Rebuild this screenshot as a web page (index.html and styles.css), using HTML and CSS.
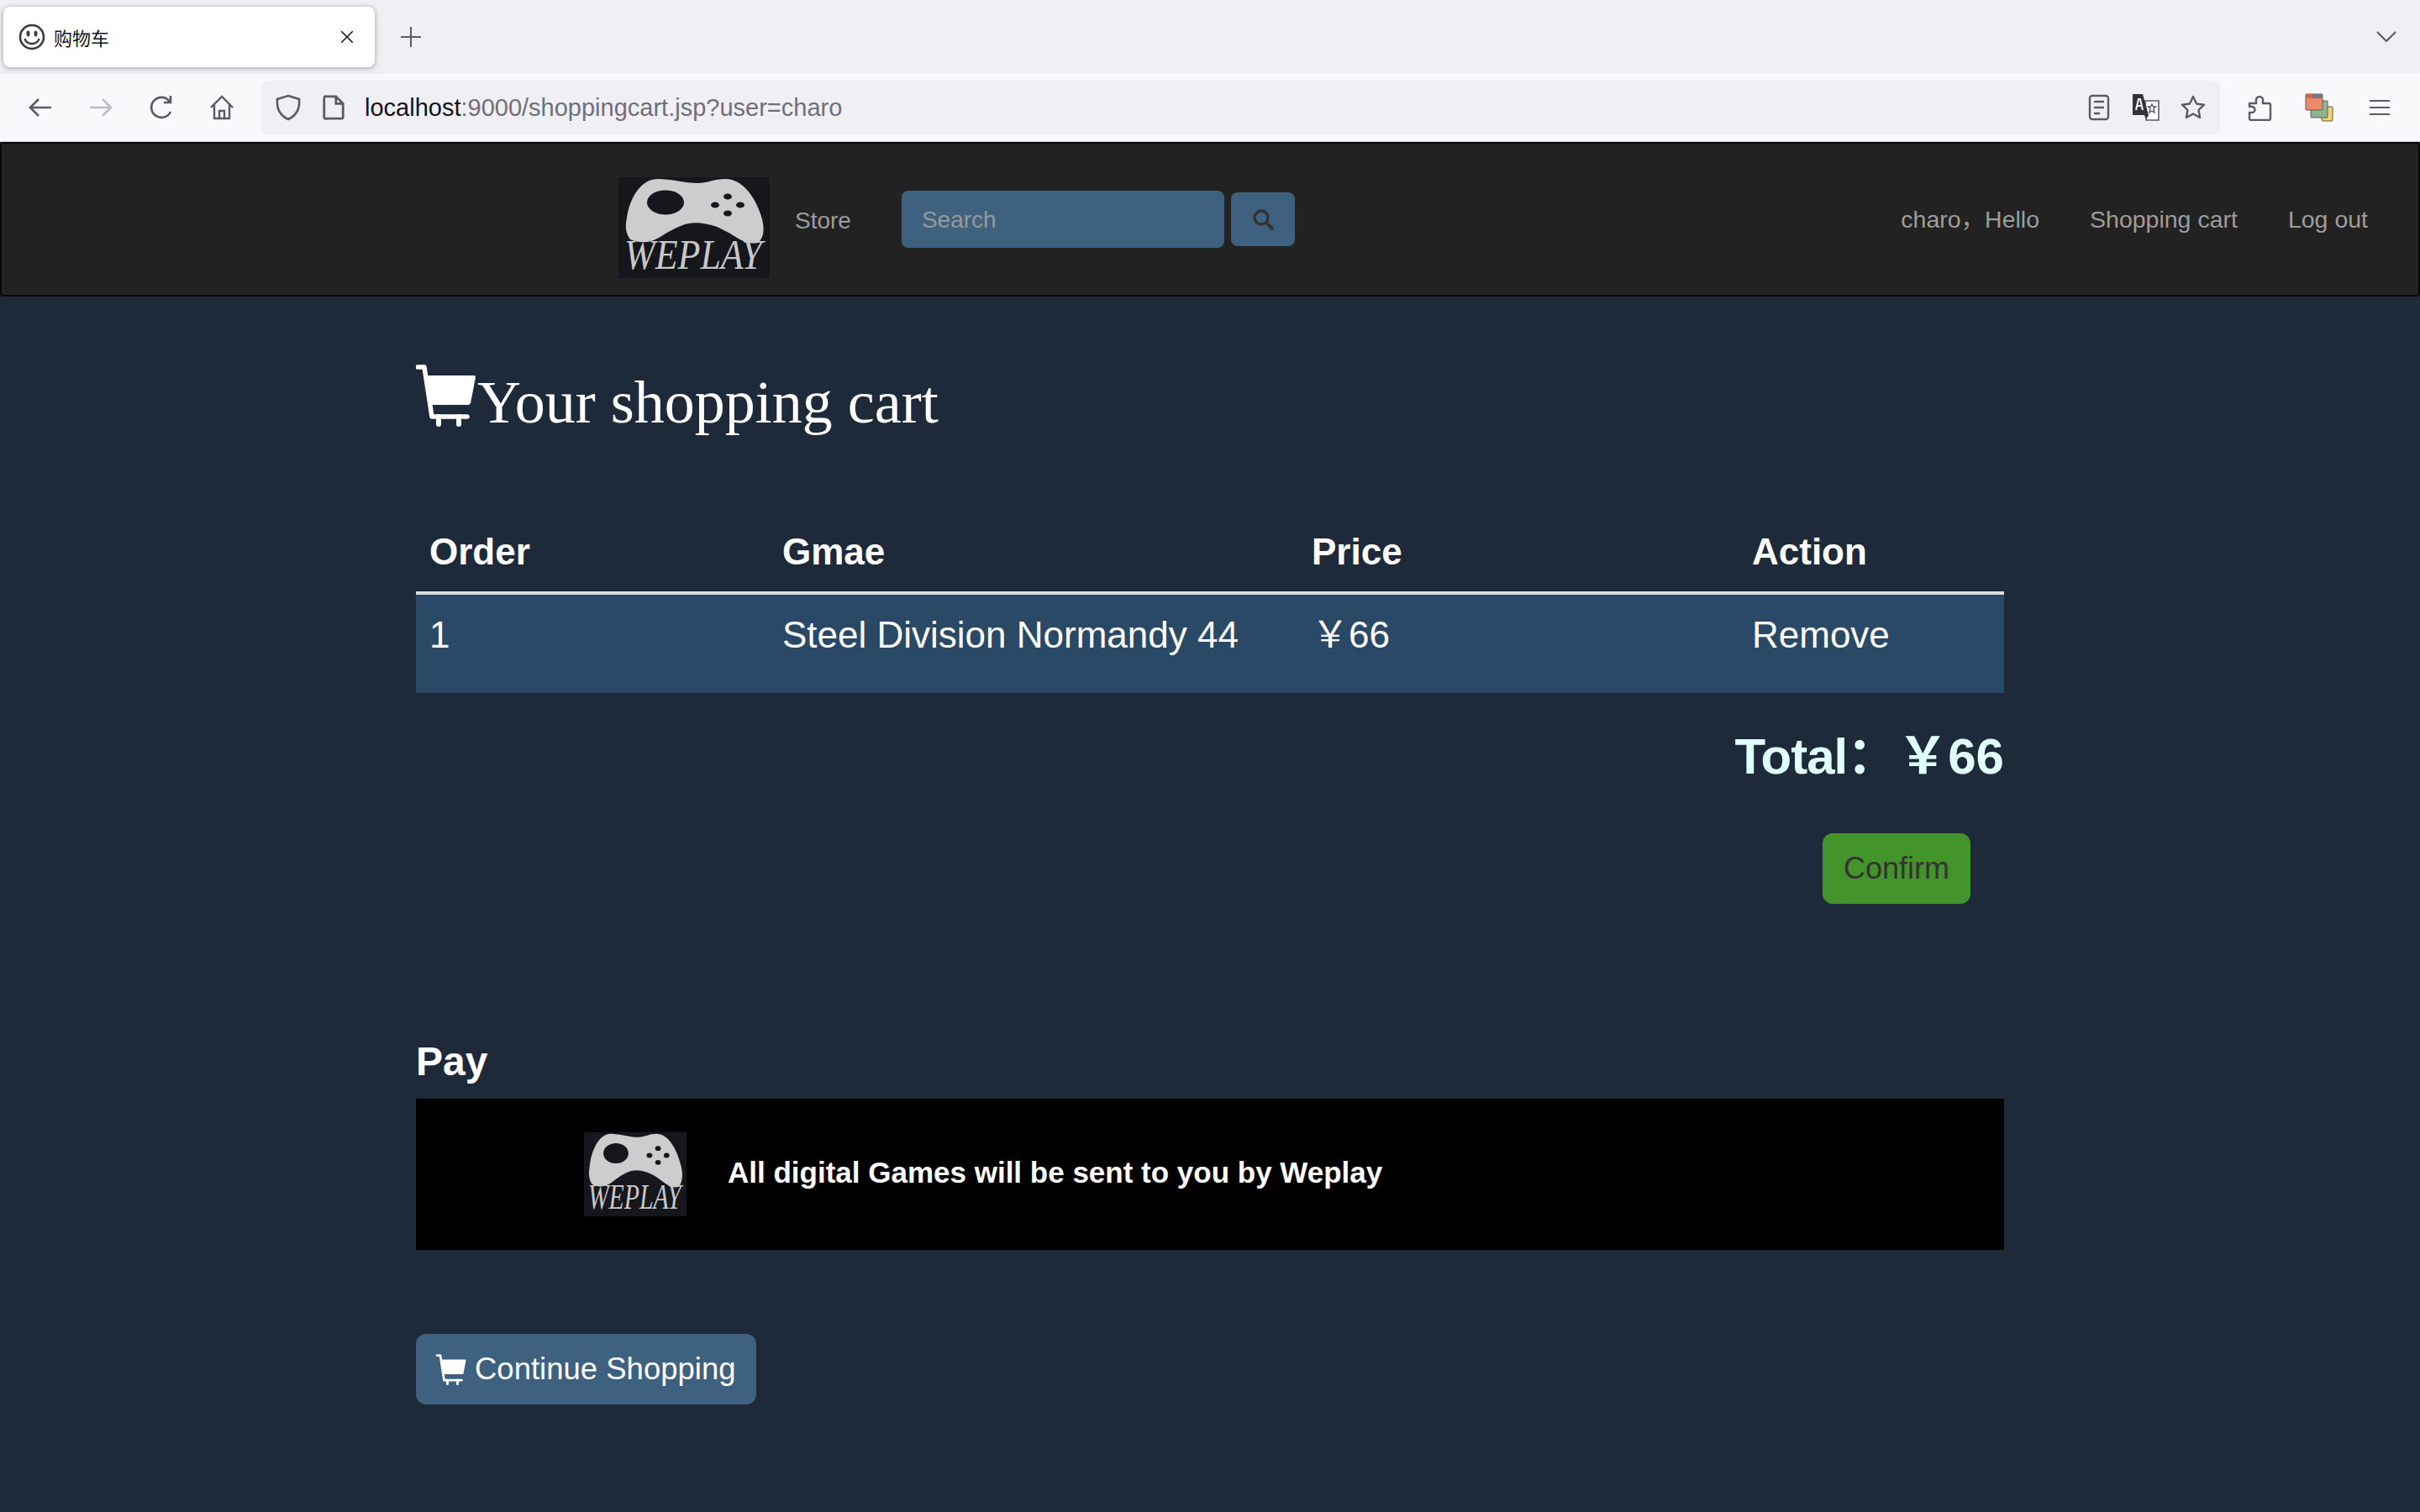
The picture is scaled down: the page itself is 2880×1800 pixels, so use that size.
FILE: index.html
```html
<!DOCTYPE html>
<html lang="zh">
<head>
    <meta charset="UTF-8">
    <title>购物车</title>
    <link rel="stylesheet" href="styles.css">
</head>
<body>

<div class="tabstrip">
    <div class="tab">
        <svg class="tab-icon" viewBox="0 0 32 32"><circle cx="16" cy="16" r="14" fill="none" stroke="#3a3a44" stroke-width="2.6"/><ellipse cx="11.5" cy="12" rx="2" ry="3.6" fill="#3a3a44"/><ellipse cx="20.5" cy="12" rx="2" ry="3.6" fill="#3a3a44"/><path d="M7.5 18c2 8 15 8 17 0" fill="none" stroke="#3a3a44" stroke-width="2.4"/></svg>
        <span class="tab-title">购物车</span>
        <svg class="tab-close" viewBox="0 0 16 16"><path d="M2 2l12 12M14 2L2 14" stroke="#15141a" stroke-width="1.4"/></svg>
    </div>
    <svg class="tab-new" viewBox="0 0 24 24"><path d="M12 0v24M0 12h24" stroke="#5b5b66" stroke-width="2"/></svg>
    <svg class="tab-list" viewBox="0 0 26 16"><path d="M2 2l11 11L24 2" fill="none" stroke="#5b5b66" stroke-width="2.2"/></svg>
</div>

<div class="toolbar">
    <svg class="tool" viewBox="0 0 32 32"><path d="M29 16H5M14 6L4 16l10 10" fill="none" stroke="#5b5b66" stroke-width="2.6"/></svg>
    <svg class="tool" viewBox="0 0 32 32"><path d="M3 16h24M18 6l10 10-10 10" fill="none" stroke="#bcbcc2" stroke-width="2.6"/></svg>
    <svg class="tool" viewBox="0 0 32 32"><path d="M27 21a12 12 0 1 1-1-12M27 2v8h-8" fill="none" stroke="#5b5b66" stroke-width="2.6"/></svg>
    <svg class="tool tool-home" viewBox="0 0 32 32"><path d="M3 16L16 3l13 13M7 13v16h18V13M13 29v-9h6v9" fill="none" stroke="#5b5b66" stroke-width="2.4"/></svg>
    <div class="urlbar">
        <svg class="url-icon" viewBox="0 0 32 32"><path d="M16 2l13 4c1 11-2 19-13 24C5 25 2 17 3 6z" fill="none" stroke="#5b5b66" stroke-width="2.6"/></svg>
        <svg class="url-icon page-icon" viewBox="0 0 32 32"><path d="M7 2h12l9 9v17a2 2 0 0 1-2 2H7a2 2 0 0 1-3-2V4a2 2 0 0 1 3-2zM19 2v9h9" fill="none" stroke="#5b5b66" stroke-width="3"/></svg>
        <span class="url-text"><span class="url-host">localhost</span>:9000/shoppingcart.jsp?user=charo</span>
        <svg class="url-end" viewBox="0 0 32 32"><rect x="5" y="2" width="22" height="28" rx="3" fill="none" stroke="#5b5b66" stroke-width="2.4"/><path d="M10 9h12M10 16h12M10 23h7" stroke="#5b5b66" stroke-width="2.4"/></svg>
        <svg class="url-end" viewBox="0 0 32 32"><path d="M15 8h16v23H16z" fill="#fff" stroke="#5b5b66" stroke-width="1.6"/><path d="M0 0h12l7 25-3 5-2-5H0z" fill="#33333a"/><path d="M4 19l3-13h2l3 13M5 14h6" fill="none" stroke="#fff" stroke-width="2"/><path d="M23 12l1.500 3h3l-2.500 2 1 5-3-2-3 2 1-5-2.500-2h3z" fill="none" stroke="#5b5b66" stroke-width="1.400"/></svg>
        <svg class="url-end" viewBox="0 0 32 32"><path d="M16 3l4 8.500 9 1.200-6.500 6.300 1.600 9L16 23.500 7.900 28l1.600-9L3 12.700l9-1.200z" fill="none" stroke="#5b5b66" stroke-width="2.4" stroke-linejoin="round"/></svg>
    </div>
    <svg class="tool tool-ext" viewBox="0 0 32 32"><path d="M4 11h8V6a4.200 4.200 0 0 1 8 0v5h7a2 2 0 0 1 2 2v16a2 2 0 0 1-2 2H6a2 2 0 0 1-2-2v-7h3a3.500 3.500 0 0 0 0-7H4z" fill="none" stroke="#5b5b66" stroke-width="2.4" stroke-linejoin="round"/></svg>
    <svg class="tool tool-multi" viewBox="0 0 34 34"><rect x="20" y="16" width="13" height="17" rx="1" fill="#f0d26e" stroke="#5b5b66"/><rect x="7" y="9" width="20" height="20" rx="1" fill="#8fb491" stroke="#5b5b66"/><rect x="1" y="1" width="20" height="19" rx="1" fill="#f08a66" stroke="#5b5b66"/><path d="M1 1h20v5H1z" fill="#77777d"/><path d="M2 1h6v5H2z" fill="#e5603c"/></svg>
    <svg class="tool tool-menu" viewBox="0 0 26 22"><path d="M1 3h24M1 11h24M1 19h24" stroke="#5b5b66" stroke-width="2.2"/></svg>
</div>

<nav class="navbar">
    <svg class="logo logo-nav" viewBox="0 0 180 120" preserveAspectRatio="none">
        <rect width="180" height="120" fill="#16171d"/>
        <path d="M47 2C62 2 80 7 94 7C106 7 114 2 127 2C150 2 165 28 171 50C174 62 173 72 166 78C156 80 148 76 141 72C130 65 118 58 106 56C98 54 90 54 84 55C72 57 58 66 48 72C40 77 27 80 14 74C8 66 8 58 10 48C13 26 26 2 47 2Z" fill="#cdcdcd"/>
        <ellipse cx="56" cy="30" rx="22" ry="14.500" fill="#16171d"/>
        <ellipse cx="130" cy="23" rx="5" ry="3.500" fill="#16171d"/>
        <ellipse cx="115" cy="33" rx="5" ry="3.500" fill="#16171d"/>
        <ellipse cx="145" cy="33" rx="5" ry="3.500" fill="#16171d"/>
        <ellipse cx="130" cy="43" rx="5" ry="3.500" fill="#16171d"/>
        <text class="logo-text" x="7" y="95" transform="scale(1 1.150)">WEPLAY</text>
    </svg>
    <a class="nav-link nav-store" href="#">Store</a>
    <input class="search-input" type="text" placeholder="Search">
    <button class="search-btn" type="button">
        <svg viewBox="0 0 28 28" width="28" height="28"><circle cx="12" cy="12" r="8" fill="none" stroke="#333" stroke-width="3.400"/><path d="M18 18l7 7" stroke="#333" stroke-width="4" stroke-linecap="round"/></svg>
    </button>
    <div class="nav-right">
        <a class="nav-link" href="#">charo，Hello</a>
        <a class="nav-link" href="#">Shopping cart</a>
        <a class="nav-link" href="#">Log out</a>
    </div>
</nav>

<div class="container">

    <h1 class="page-title">
        <svg class="cart cart-big" viewBox="0 0 72 74"><path d="M2 3h8l9 59h42" fill="none" stroke="#fff" stroke-width="5.500" stroke-linecap="round" stroke-linejoin="round"/><path d="M12 13h57a2 2 0 0 1 2 2l-6 31a3 3 0 0 1-3 2H17z" fill="#fff"/><path d="M27 62v9M51 62v9" stroke="#fff" stroke-width="6" stroke-linecap="round"/></svg>Your shopping cart
    </h1>

    <table class="cart-table">
        <thead>
            <tr>
                <th class="col-order">Order</th>
                <th class="col-game">Gmae</th>
                <th class="col-price">Price</th>
                <th>Action</th>
            </tr>
        </thead>
        <tbody>
            <tr>
                <td>1</td>
                <td>Steel Division Normandy 44</td>
                <td>￥66</td>
                <td>Remove</td>
            </tr>
        </tbody>
    </table>

    <h2 class="total"><span class="total-label">Total</span>：￥66</h2>

    <div class="confirm-row">
        <button class="btn-confirm" type="button">Confirm</button>
    </div>

    <h3 class="pay-title">Pay</h3>
    <div class="pay-box">
        <svg class="logo logo-pay" viewBox="0 0 180 120" preserveAspectRatio="none">
            <rect width="180" height="120" fill="#16171d"/>
            <path d="M47 2C62 2 80 7 94 7C106 7 114 2 127 2C150 2 165 28 171 50C174 62 173 72 166 78C156 80 148 76 141 72C130 65 118 58 106 56C98 54 90 54 84 55C72 57 58 66 48 72C40 77 27 80 14 74C8 66 8 58 10 48C13 26 26 2 47 2Z" fill="#cdcdcd"/>
            <ellipse cx="56" cy="30" rx="22" ry="14.500" fill="#16171d"/>
            <ellipse cx="130" cy="23" rx="5" ry="3.500" fill="#16171d"/>
            <ellipse cx="115" cy="33" rx="5" ry="3.500" fill="#16171d"/>
            <ellipse cx="145" cy="33" rx="5" ry="3.500" fill="#16171d"/>
            <ellipse cx="130" cy="43" rx="5" ry="3.500" fill="#16171d"/>
            <text class="logo-text" x="7" y="95" transform="scale(1 1.150)">WEPLAY</text>
        </svg>
        <span class="pay-text">All digital Games will be sent to you by Weplay</span>
    </div>

    <button class="btn-continue" type="button">
        <svg class="cart cart-small" viewBox="0 0 72 74"><path d="M2 3h8l9 59h42" fill="none" stroke="#fff" stroke-width="5.500" stroke-linecap="round" stroke-linejoin="round"/><path d="M12 13h57a2 2 0 0 1 2 2l-6 31a3 3 0 0 1-3 2H17z" fill="#fff"/><path d="M27 62v9M51 62v9" stroke="#fff" stroke-width="6" stroke-linecap="round"/></svg>
        Continue Shopping
    </button>

</div>

</body>
</html>
```

FILE: styles.css
```css
html, body {
    height: 100%;
}

body {
    font-family: "Liberation Sans", "Noto Sans CJK SC", Arial, sans-serif;
    margin: 0;
    padding: 0;
    background-color: #1e293a;
    color: #fff;
    overflow: hidden;
}

/* browser chrome */
.tabstrip {
    height: 88px;
    box-sizing: border-box;
    background-color: #f0f0f4;
    display: flex;
    align-items: center;
    padding: 0 27px 0 4px;
}

.tab {
    width: 442px;
    height: 72px;
    box-sizing: border-box;
    background-color: #fff;
    border-radius: 8px;
    box-shadow: 0 1px 6px rgba(0, 0, 0, 0.35);
    display: flex;
    align-items: center;
    padding: 0 24px 0 18px;
}

.tab-icon {
    width: 32px;
    height: 32px;
}

.tab-title {
    font-family: "Noto Sans CJK SC", sans-serif;
    font-size: 22px;
    color: #15141a;
    margin-left: 10px;
    flex: 1;
}

.tab-close {
    width: 18px;
    height: 18px;
}

.tab-new {
    width: 24px;
    height: 24px;
    margin-left: 31px;
}

.tab-list {
    width: 26px;
    height: 16px;
    margin-left: auto;
}

.toolbar {
    height: 81px;
    box-sizing: border-box;
    background-color: #f9f9fb;
    border-bottom: 1px solid #cfcfd8;
    display: flex;
    align-items: center;
    padding: 0 35px 0 32px;
}

.tool {
    width: 32px;
    height: 32px;
    margin-right: 40px;
    flex: none;
}

.tool-home {
    margin-right: 31px;
}

.tool-ext {
    margin-left: 31px;
    margin-right: 38px;
}

.tool-multi {
    width: 34px;
    height: 34px;
    margin-right: 42px;
}

.tool-menu {
    width: 26px;
    height: 22px;
    margin-right: 0;
}

.urlbar {
    flex: 1;
    height: 64px;
    background-color: #f0f0f4;
    border-radius: 8px;
    display: flex;
    align-items: center;
    padding: 0 16px;
}

.url-icon {
    width: 32px;
    height: 32px;
    margin-right: 23px;
    flex: none;
}

.page-icon {
    width: 30px;
    margin-right: 22px;
}

.url-text {
    font-size: 29px;
    color: #6f6f78;
    flex: 1;
}

.url-host {
    color: #15141a;
}

.url-end {
    width: 32px;
    height: 32px;
    margin-left: 24px;
    flex: none;
}

/* site navbar */
.navbar {
    height: 184px;
    box-sizing: border-box;
    background-color: #222;
    border: 2px solid #080808;
    border-radius: 4px;
    display: flex;
    align-items: center;
    padding: 0 60px 0 734px;
}

.logo {
    display: block;
    flex: none;
}

.logo-text {
    font-family: "Liberation Serif", serif;
    font-style: italic;
    font-size: 44px;
    fill: #c8c8c8;
}

.logo-nav {
    width: 180px;
    height: 120px;
    margin-top: 20px;
}

.nav-link {
    font-size: 28px;
    color: #9d9d9d;
    text-decoration: none;
}

.nav-store {
    margin-left: 30px;
    padding-top: 4px;
}

.search-input {
    width: 384px;
    height: 68px;
    box-sizing: border-box;
    margin-left: 60px;
    padding: 2px 24px 0;
    font-family: "Liberation Sans", Arial, sans-serif;
    font-size: 28px;
    background-color: #3e6180;
    border: none;
    border-radius: 8px;
}

.search-input::placeholder {
    color: #999;
    opacity: 1;
}

.search-btn {
    width: 76px;
    height: 64px;
    margin-left: 8px;
    background-color: #3e6180;
    border: none;
    border-radius: 8px;
    display: flex;
    align-items: center;
    justify-content: center;
    padding: 0;
}

.nav-right {
    margin-left: auto;
    display: flex;
    align-items: center;
    gap: 60px;
}

.nav-right .nav-link {
    font-size: 28.500px;
    line-height: 40px;
}

/* page */
.container {
    width: 1890px;
    margin: 0 auto;
}

.page-title {
    font-family: "Liberation Serif", "Times New Roman", serif;
    font-size: 72px;
    font-weight: normal;
    line-height: 80px;
    margin: 86px 0 0 0;
    display: flex;
    align-items: center;
}

.cart {
    flex: none;
}

.cart-big {
    width: 72px;
    height: 74px;
    margin-right: 1px;
    margin-top: -16px;
}

.cart-table {
    border-collapse: collapse;
    table-layout: fixed;
    width: 100%;
    margin-top: 93px;
    font-size: 44px;
}

.cart-table th {
    text-align: left;
    padding: 17px 16px 19px;
    line-height: 56px;
    border-bottom: 4px solid #ddd;
}

.cart-table td {
    background-color: #2a4966;
    padding: 23px 16px 44px;
    line-height: 50px;
}

.col-order {
    width: 388px;
}

.col-game {
    width: 598px;
}

.col-price {
    width: 492px;
}

.total {
    font-size: 60px;
    font-weight: bold;
    color: #e0ffff;
    text-align: right;
    line-height: 70px;
    margin: 41px 0 0;
}

.total-label {
    letter-spacing: -1px;
}

.confirm-row {
    display: flex;
    justify-content: flex-end;
    padding-right: 40px;
    margin-top: 56px;
}

.btn-confirm {
    width: 176px;
    height: 84px;
    font-family: "Liberation Sans", Arial, sans-serif;
    font-size: 36px;
    color: #333;
    background-color: #43942a;
    border: none;
    border-radius: 12px;
    padding: 0;
}

.pay-title {
    font-size: 48px;
    font-weight: bold;
    line-height: 56px;
    margin: 160px 0 16px;
}

.pay-box {
    height: 180px;
    background-color: #000;
    display: flex;
    align-items: center;
    padding-left: 200px;
}

.logo-pay {
    width: 122px;
    height: 100px;
}

.pay-text {
    font-size: 35px;
    font-weight: bold;
    margin-left: 49px;
    margin-top: -4px;
}

.btn-continue {
    width: 405px;
    height: 84px;
    margin-top: 100px;
    font-family: "Liberation Sans", Arial, sans-serif;
    font-size: 36.500px;
    color: #fff;
    background-color: #3e6180;
    border: none;
    border-radius: 12px;
    padding: 0 0 0 24px;
    display: flex;
    align-items: center;
    gap: 10px;
}

.cart-small {
    width: 36px;
    height: 37px;
}
```
